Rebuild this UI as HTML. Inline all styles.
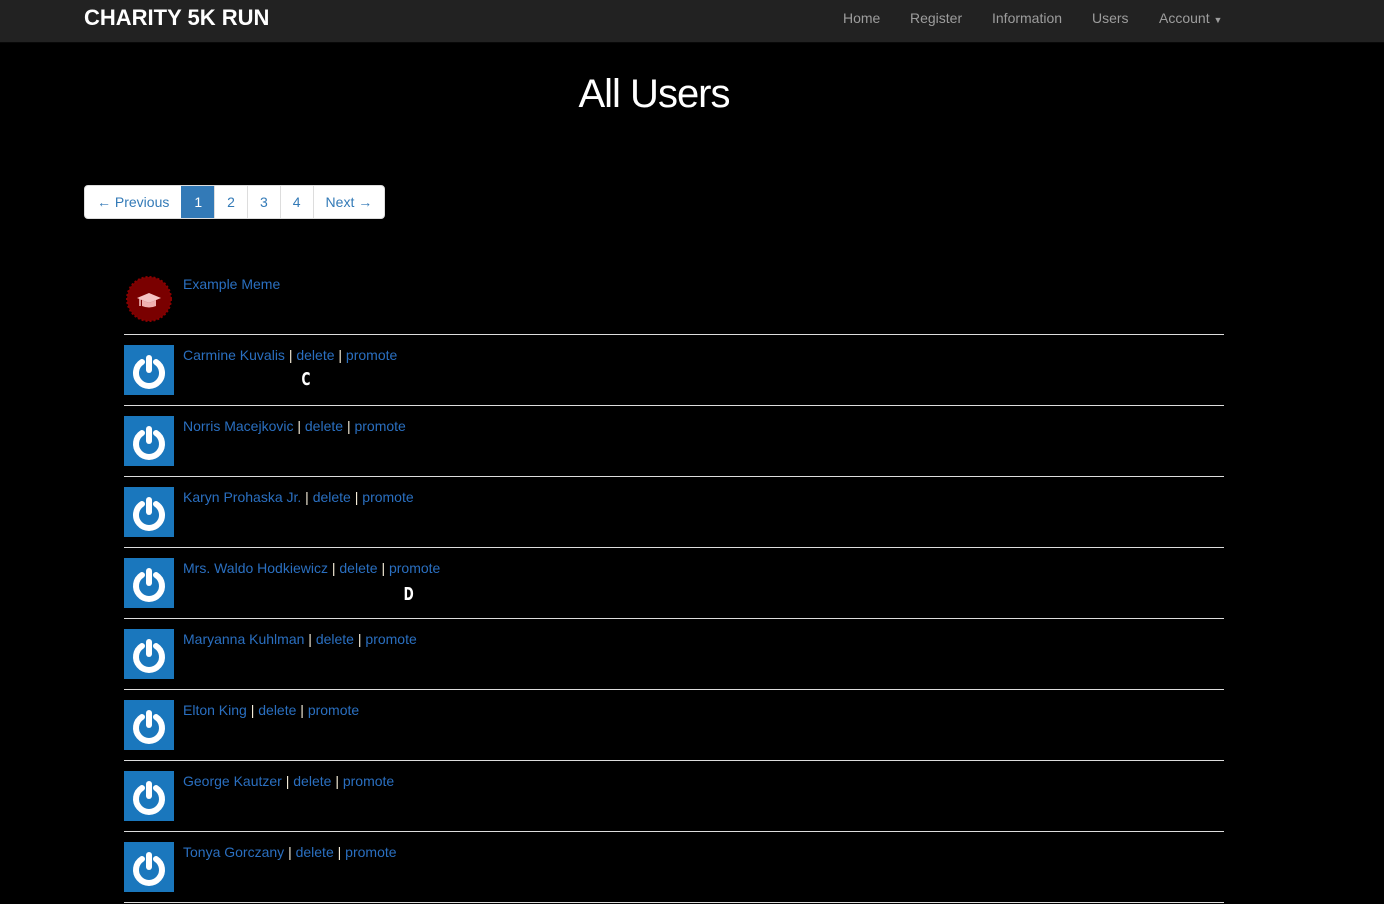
<!DOCTYPE html>
<html><head><meta charset="utf-8"><style>
body{margin:0;background:#000;width:1384px;height:904px;overflow:hidden;font-family:"Liberation Sans",Arial,sans-serif;font-size:14px;position:relative}
.nav{position:absolute;left:0;top:0;width:1384px;height:42px;background:#222;border-bottom:1px solid #080808}
.brand{position:absolute;left:84px;top:5px;color:#fff;font-weight:bold;font-size:22px;letter-spacing:0}
.nl{position:absolute;top:10px;color:#9d9d9d;font-size:14px}
h1{position:absolute;left:0;width:1308px;text-align:center;top:72px;margin:0;color:#fff;font-weight:normal;font-size:40px;letter-spacing:-1px}
.pg{position:absolute;left:84px;top:185px;height:32px;display:flex;border:1px solid #ddd;border-radius:4px;background:#fff;overflow:hidden}
.pg span{display:block;line-height:32px;padding:0 12px;color:#337ab7;border-left:1px solid #ddd;font-size:14px}
.pg span:first-child{border-left:none}
.pg .a{background:#337ab7;color:#fff;border-color:#337ab7}
.row{position:absolute;left:124px;width:1100px;height:71px;border-bottom:1px solid #ddd}
.av{position:absolute;left:0;top:11px;width:50px;height:50px;background:#1a77bd}
.t{position:absolute;left:59px;top:13px;color:#2a6fc0;white-space:nowrap}
.t i{color:#f4ecd8;font-style:normal}
.x{position:absolute;color:#fff;font-weight:bold;font-size:18px;font-family:"DejaVu Sans Condensed","Liberation Sans Narrow",sans-serif;transform:scaleX(0.75)}
</style></head><body>
<div class="nav">
<div class="brand">CHARITY 5K RUN</div>
<span class="nl" style="left:843px">Home</span>
<span class="nl" style="left:910px">Register</span>
<span class="nl" style="left:992px">Information</span>
<span class="nl" style="left:1092px">Users</span>
<span class="nl" style="left:1159px">Account <span style="font-size:9px">▼</span></span>
</div>
<h1>All Users</h1>
<div class="pg"><span>← Previous</span><span class="a">1</span><span>2</span><span>3</span><span>4</span><span>Next →</span></div>

<div class="row" style="top:263px">
<svg style="position:absolute;left:2px;top:13px" width="46" height="46" viewBox="0 0 46 46"><circle cx="23" cy="23" r="22" fill="#7a0000" stroke="#8a0000" stroke-width="2" stroke-dasharray="2 2"/><path d="M11 22 L23 17 L35 22 L23 27Z" fill="#f4c4c4"/><path d="M16 24 v6 q7 3 14 0 v-6 l-7 3z" fill="#f0b0b0"/><path d="M14 23 v7" stroke="#f4c4c4" stroke-width="1.5"/></svg>
<div class="t" style="top:13px">Example Meme</div></div>

<div class="row" style="top:334px"><svg class="av" viewBox="0 0 50 50"><rect width="50" height="50" fill="#1a77bd"/><path d="M18 17 A13 13 0 1 0 32 17" fill="none" stroke="#fff" stroke-width="6" stroke-linecap="round"/><path d="M25 13 V25" stroke="#fff" stroke-width="6" stroke-linecap="round"/></svg><div class="t">Carmine Kuvalis <i>|</i> delete <i>|</i> promote</div><div class="x" style="left:176px;top:35px">C</div></div>
<div class="row" style="top:405px"><svg class="av" viewBox="0 0 50 50"><rect width="50" height="50" fill="#1a77bd"/><path d="M18 17 A13 13 0 1 0 32 17" fill="none" stroke="#fff" stroke-width="6" stroke-linecap="round"/><path d="M25 13 V25" stroke="#fff" stroke-width="6" stroke-linecap="round"/></svg><div class="t">Norris Macejkovic <i>|</i> delete <i>|</i> promote</div></div>
<div class="row" style="top:476px"><svg class="av" viewBox="0 0 50 50"><rect width="50" height="50" fill="#1a77bd"/><path d="M18 17 A13 13 0 1 0 32 17" fill="none" stroke="#fff" stroke-width="6" stroke-linecap="round"/><path d="M25 13 V25" stroke="#fff" stroke-width="6" stroke-linecap="round"/></svg><div class="t">Karyn Prohaska Jr. <i>|</i> delete <i>|</i> promote</div></div>
<div class="row" style="top:547px"><svg class="av" viewBox="0 0 50 50"><rect width="50" height="50" fill="#1a77bd"/><path d="M18 17 A13 13 0 1 0 32 17" fill="none" stroke="#fff" stroke-width="6" stroke-linecap="round"/><path d="M25 13 V25" stroke="#fff" stroke-width="6" stroke-linecap="round"/></svg><div class="t">Mrs. Waldo Hodkiewicz <i>|</i> delete <i>|</i> promote</div><div class="x" style="left:278px;top:37px">D</div></div>
<div class="row" style="top:618px"><svg class="av" viewBox="0 0 50 50"><rect width="50" height="50" fill="#1a77bd"/><path d="M18 17 A13 13 0 1 0 32 17" fill="none" stroke="#fff" stroke-width="6" stroke-linecap="round"/><path d="M25 13 V25" stroke="#fff" stroke-width="6" stroke-linecap="round"/></svg><div class="t">Maryanna Kuhlman <i>|</i> delete <i>|</i> promote</div></div>
<div class="row" style="top:689px"><svg class="av" viewBox="0 0 50 50"><rect width="50" height="50" fill="#1a77bd"/><path d="M18 17 A13 13 0 1 0 32 17" fill="none" stroke="#fff" stroke-width="6" stroke-linecap="round"/><path d="M25 13 V25" stroke="#fff" stroke-width="6" stroke-linecap="round"/></svg><div class="t">Elton King <i>|</i> delete <i>|</i> promote</div></div>
<div class="row" style="top:760px"><svg class="av" viewBox="0 0 50 50"><rect width="50" height="50" fill="#1a77bd"/><path d="M18 17 A13 13 0 1 0 32 17" fill="none" stroke="#fff" stroke-width="6" stroke-linecap="round"/><path d="M25 13 V25" stroke="#fff" stroke-width="6" stroke-linecap="round"/></svg><div class="t">George Kautzer <i>|</i> delete <i>|</i> promote</div></div>
<div class="row" style="top:831px"><svg class="av" viewBox="0 0 50 50"><rect width="50" height="50" fill="#1a77bd"/><path d="M18 17 A13 13 0 1 0 32 17" fill="none" stroke="#fff" stroke-width="6" stroke-linecap="round"/><path d="M25 13 V25" stroke="#fff" stroke-width="6" stroke-linecap="round"/></svg><div class="t">Tonya Gorczany <i>|</i> delete <i>|</i> promote</div></div>
</body></html>
